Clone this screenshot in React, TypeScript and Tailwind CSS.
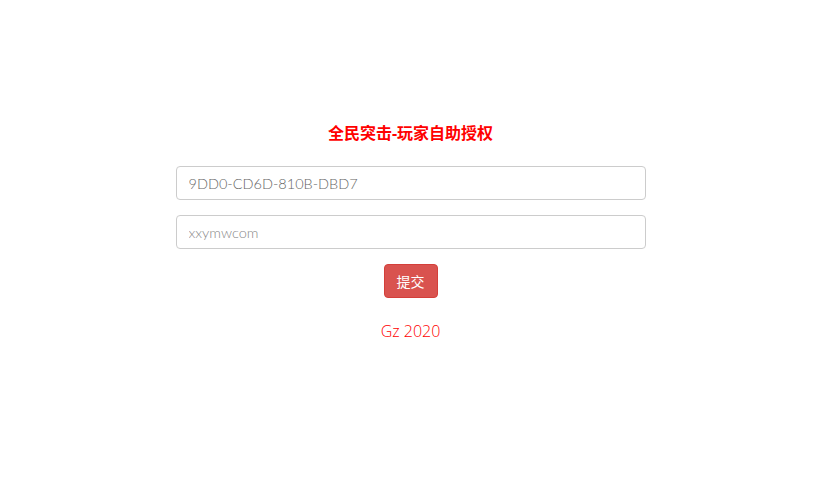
export default function App() {
  return (
    <div className="min-h-screen bg-white font-['Open_Sans','Noto_Sans_CJK_SC',sans-serif]">
      <div className="mx-auto w-[470px] pt-[121px]">
        <h3 className="text-center text-[16px] leading-[24px] font-bold text-[#ff0000]">
          全民突击-玩家自助授权
        </h3>
        <div className="mt-[21px] flex flex-col gap-[15px]">
          <input
            defaultValue="9DD0-CD6D-810B-DBD7"
            className="h-[34px] w-full rounded border border-[#ccc] px-3 font-['Lato','Open_Sans',sans-serif] text-[14.5px] font-light text-[#666] outline-none"
          />
          <input
            placeholder="xxymwcom"
            className="h-[34px] w-full rounded border border-[#ccc] px-3 font-['Lato','Open_Sans',sans-serif] text-[14.5px] font-light text-[#666] placeholder:text-[#888] outline-none"
          />
        </div>
        <div className="mt-[15px] flex justify-center">
          <button className="h-[34px] w-[54px] rounded border border-[#d43f3a] bg-[#d9534f] text-[14px] text-white">
            提交
          </button>
        </div>
        <p className="mt-[22px] text-center text-[16px] font-light leading-[22px] text-[#ff0000]">
          Gz 2020
        </p>
      </div>
    </div>
  );
}
